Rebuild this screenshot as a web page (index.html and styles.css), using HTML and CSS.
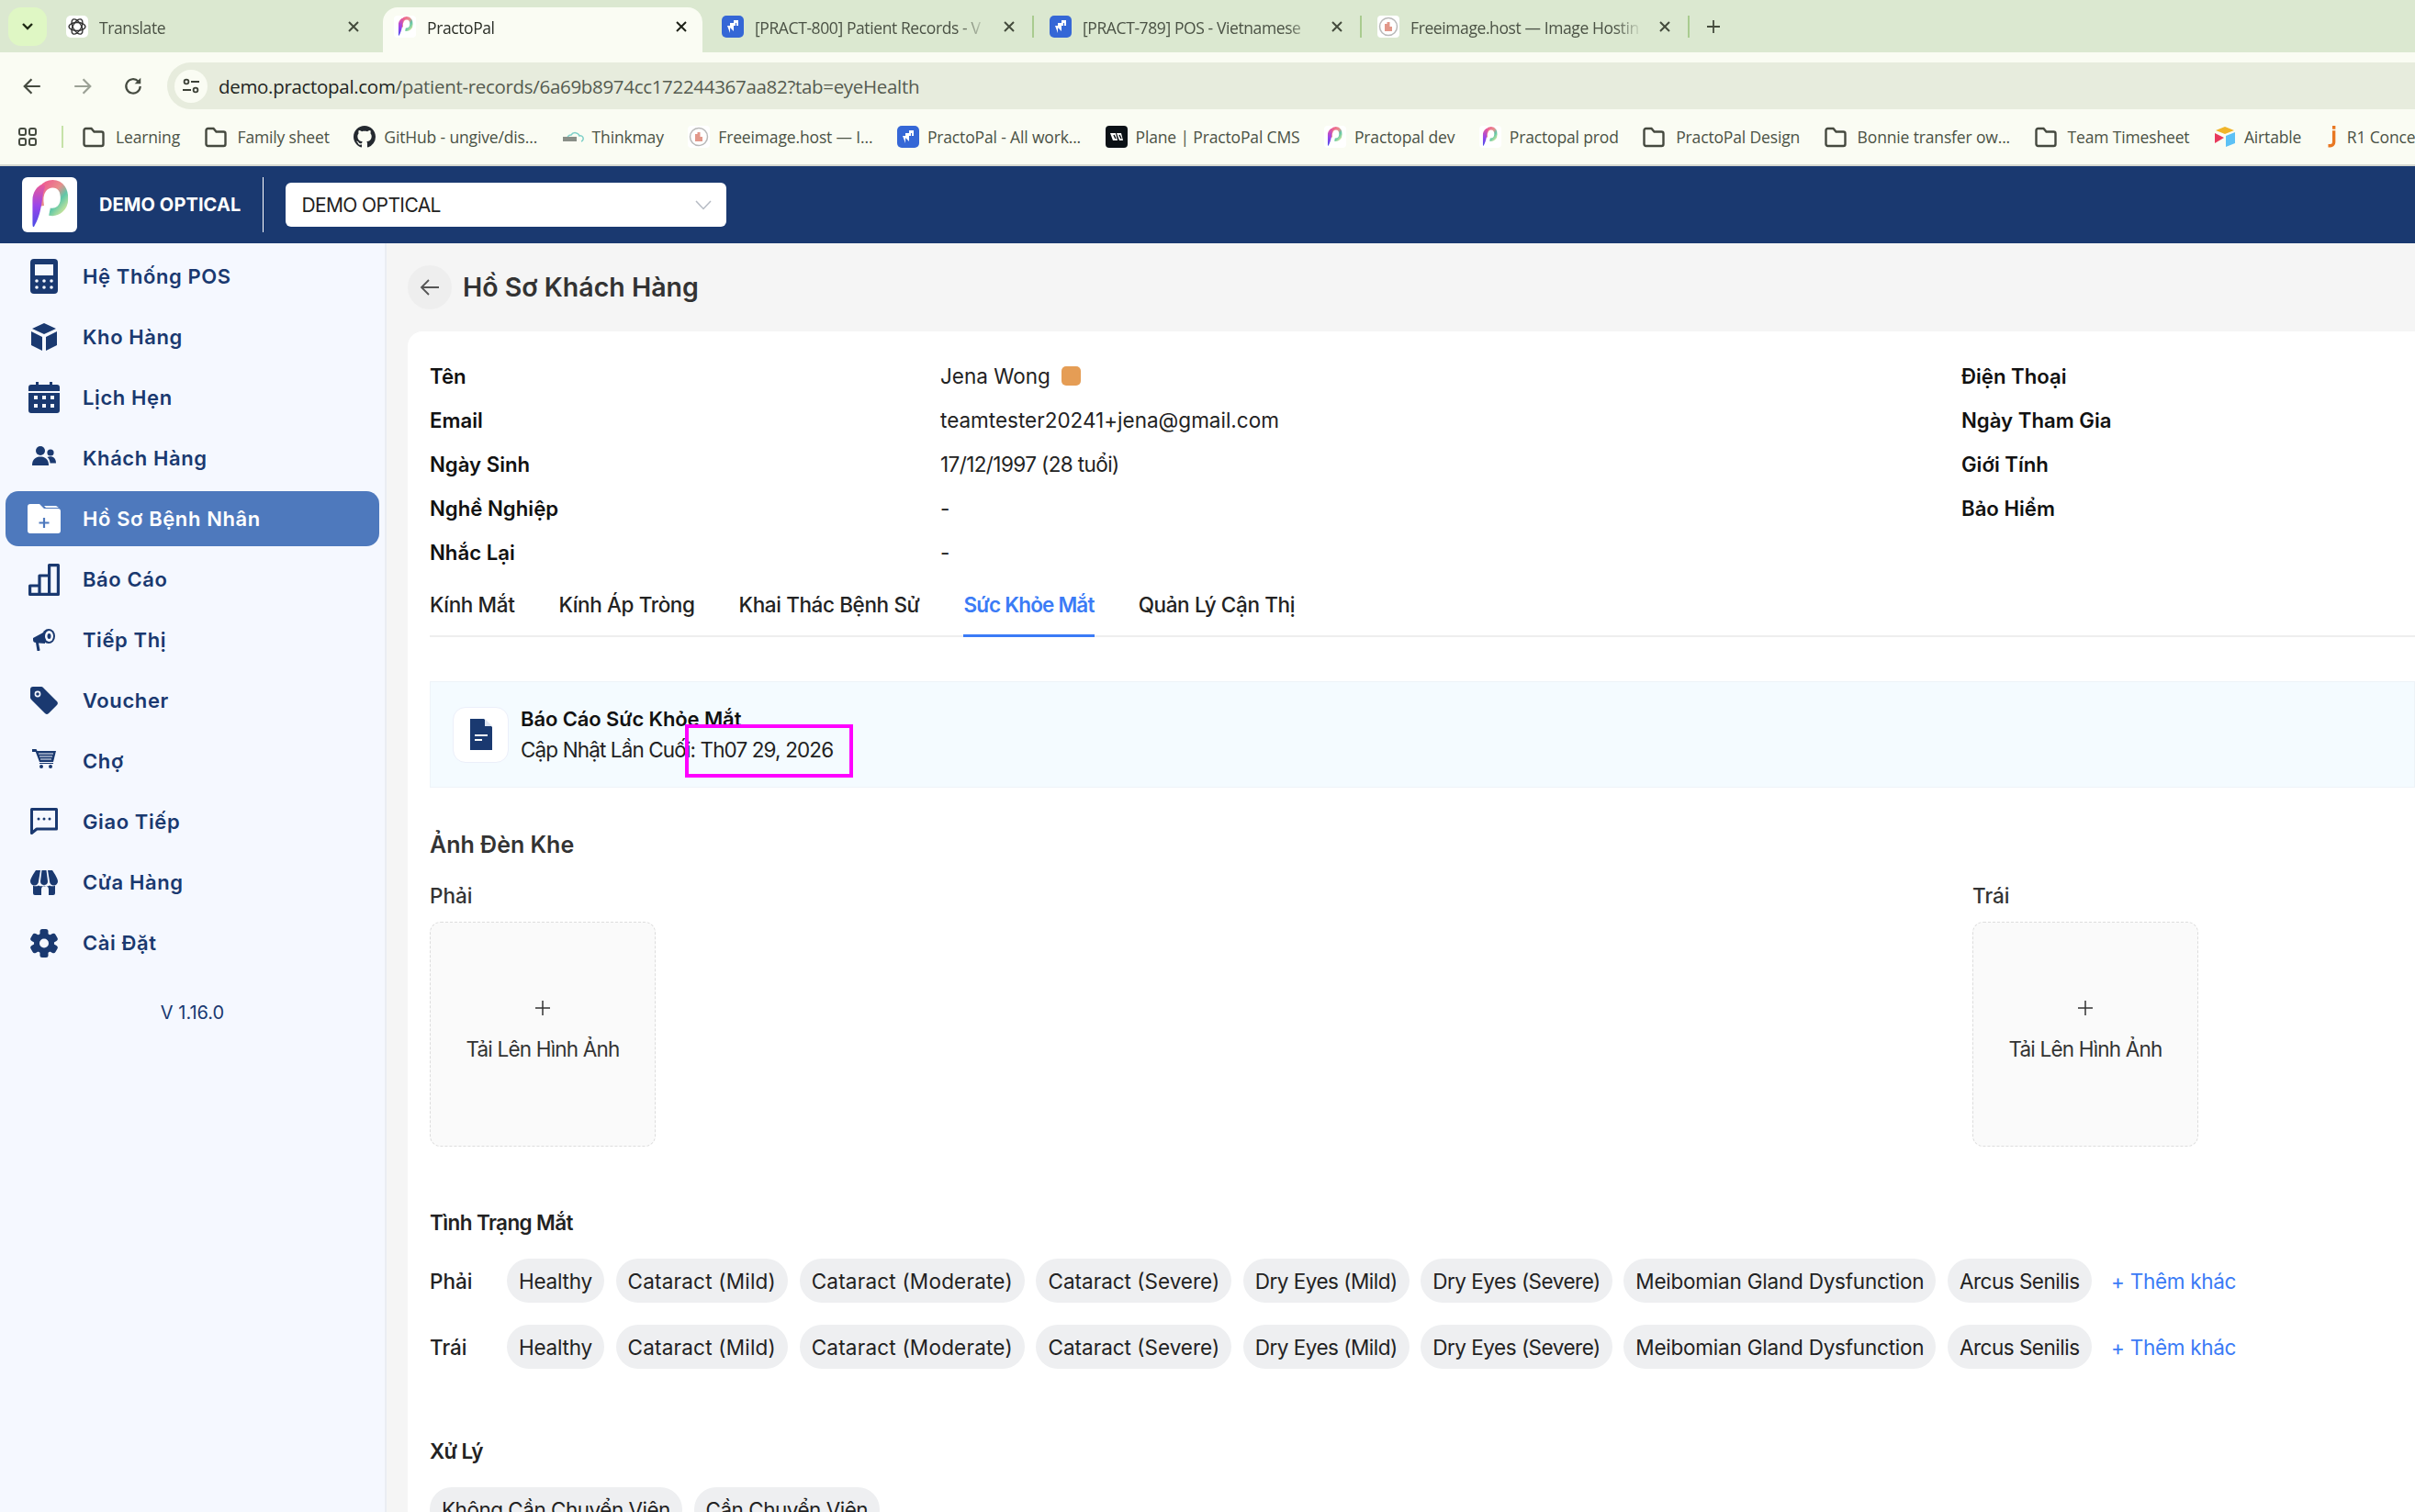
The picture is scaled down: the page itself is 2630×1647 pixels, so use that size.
FILE: index.html
```html
<!DOCTYPE html>
<html lang="en">
<head>
  <meta charset="UTF-8">
  <title>PractoPal</title>
  <link rel="stylesheet" href="styles.css">
</head>
<body>
<svg class="defs" aria-hidden="true">
  <defs>
    <linearGradient id="arc" x1="0" y1="0" x2="1" y2="1">
      <stop offset="0" stop-color="#f0568f"/>
      <stop offset=".45" stop-color="#e88f8c"/>
      <stop offset=".7" stop-color="#5fc7a8"/>
      <stop offset="1" stop-color="#cfe69a"/>
    </linearGradient>
    <linearGradient id="stem" x1="0" y1="0" x2="0" y2="1">
      <stop offset="0" stop-color="#ea5a98"/>
      <stop offset=".5" stop-color="#9a45ea"/>
      <stop offset="1" stop-color="#4a4ce6"/>
    </linearGradient>
    <symbol id="i-logo" viewBox="0 0 24 32">
      <path d="M6 17C4 6 10 2.500 14 2.500c5.500 0 7.500 5 7.500 9.500 0 6-4.500 9.500-9.500 8.500" fill="none" stroke="url(#arc)" stroke-width="5"/>
      <path d="M1 13C1 8 4 4 7 3c3 0 2 2 1 5-1 4-1 14-6 22-1 1-1-1-1-3z" fill="url(#stem)"/>
    </symbol>
    <symbol id="i-folder" viewBox="0 0 24 24">
      <path d="M1.500 5a2 2 0 0 1 2-2h6l3 3.500h8a2 2 0 0 1 2 2V20a2 2 0 0 1-2 2h-17a2 2 0 0 1-2-2z" fill="none" stroke="#45493f" stroke-width="2.400"/>
    </symbol>
    <symbol id="i-freeimage" viewBox="0 0 24 24">
      <rect width="24" height="24" rx="4" fill="#fff"/>
      <circle cx="12" cy="12" r="9.500" fill="none" stroke="#b9b9b9" stroke-width="1.500"/>
      <path d="M8 17V9h2.500v-2h3v5H16v5z" fill="#e2988a"/>
    </symbol>
  </defs>
</svg>

<div class="tabstrip">
  <div class="tabsearch">
    <svg width="14" height="10" viewBox="0 0 14 10"><path d="M2 2l5 5 5-5" fill="none" stroke="#1f2a14" stroke-width="2.400"/></svg>
  </div>
  <div class="tab">
    <svg class="fav" viewBox="0 0 24 24">
      <rect width="24" height="24" rx="5" fill="#fff"/>
      <g fill="none" stroke="#333" stroke-width="1.400">
        <ellipse cx="12" cy="12" rx="9" ry="4.500"/>
        <ellipse cx="12" cy="12" rx="9" ry="4.500" transform="rotate(60 12 12)"/>
        <ellipse cx="12" cy="12" rx="9" ry="4.500" transform="rotate(120 12 12)"/>
      </g>
    </svg>
    <span class="tab-title">Translate</span>
    <svg class="tab-x" viewBox="0 0 14 14"><path d="M2 2l10 10M12 2L2 12" stroke="#444b3c" stroke-width="2"/></svg>
  </div>
  <div class="tab tab-active">
    <span class="fav fav-white"><svg viewBox="0 0 24 32"><use href="#i-logo"/></svg></span>
    <span class="tab-title">PractoPal</span>
    <svg class="tab-x" viewBox="0 0 14 14"><path d="M2 2l10 10M12 2L2 12" stroke="#1d2117" stroke-width="2"/></svg>
  </div>
  <div class="tab tab-sep">
    <svg class="fav" viewBox="0 0 24 24"><rect width="24" height="24" rx="5" fill="#3567d6"/><path d="M6 11h6v3l-3-.5V19zM9 8h6v3h-2v6l-4-4zM13 5h5v6h-2V8h-3z" fill="#fff"/></svg>
    <span class="tab-title">[PRACT-800] Patient Records - V</span>
    <svg class="tab-x" viewBox="0 0 14 14"><path d="M2 2l10 10M12 2L2 12" stroke="#444b3c" stroke-width="2"/></svg>
  </div>
  <div class="tab tab-sep">
    <svg class="fav" viewBox="0 0 24 24"><rect width="24" height="24" rx="5" fill="#3567d6"/><path d="M6 11h6v3l-3-.5V19zM9 8h6v3h-2v6l-4-4zM13 5h5v6h-2V8h-3z" fill="#fff"/></svg>
    <span class="tab-title">[PRACT-789] POS - Vietnamese</span>
    <svg class="tab-x" viewBox="0 0 14 14"><path d="M2 2l10 10M12 2L2 12" stroke="#444b3c" stroke-width="2"/></svg>
  </div>
  <div class="tab tab-sep">
    <svg class="fav"><use href="#i-freeimage"/></svg>
    <span class="tab-title">Freeimage.host — Image Hostin</span>
    <svg class="tab-x" viewBox="0 0 14 14"><path d="M2 2l10 10M12 2L2 12" stroke="#444b3c" stroke-width="2"/></svg>
  </div>
  <svg class="tab-plus" viewBox="0 0 16 16"><path d="M8 1v14M1 8h14" stroke="#444b3c" stroke-width="1.800"/></svg>
</div>

<div class="toolbar">
  <svg class="nav-btn" viewBox="0 0 20 20"><path d="M18 10H3M9.500 3L2.500 10l7 7" fill="none" stroke="#454b40" stroke-width="2"/></svg>
  <svg class="nav-btn" viewBox="0 0 20 20"><path d="M2 10h15M10.500 3l7 7-7 7" fill="none" stroke="#9ba195" stroke-width="2"/></svg>
  <svg class="nav-btn" viewBox="0 0 20 20"><path d="M17 10a7 7 0 1 1-2-5" fill="none" stroke="#454b40" stroke-width="2"/><path d="M17.500 1.500v6h-6z" fill="#454b40"/></svg>
  <div class="omnibox">
    <span class="site-btn">
      <svg width="20" height="20" viewBox="0 0 20 20" fill="none" stroke="#3c4136" stroke-width="1.800"><circle cx="5" cy="5" r="2.400"/><path d="M10 5h9M1 14h9"/><circle cx="15" cy="14" r="2.400"/></svg>
    </span>
    <span class="url"><span class="url-host">demo.practopal.com</span>/patient-records/6a69b8974cc172244367aa82?tab=eyeHealth</span>
  </div>
</div>

<div class="bookmarks">
  <svg class="apps" viewBox="0 0 20 20" fill="none" stroke="#454b40" stroke-width="2"><rect x="1" y="1" width="7" height="7" rx="2"/><rect x="12" y="1" width="7" height="7" rx="2"/><rect x="1" y="12" width="7" height="7" rx="2"/><rect x="12" y="12" width="7" height="7" rx="2"/></svg>
  <span class="bm-sep"></span>
  <div class="bm bm-dir"><svg class="bm-ico"><use href="#i-folder"/></svg>Learning</div>
  <div class="bm bm-dir"><svg class="bm-ico"><use href="#i-folder"/></svg>Family sheet</div>
  <div class="bm"><svg class="bm-ico" viewBox="0 0 16 16"><path fill="#24292f" d="M8 0C3.58 0 0 3.58 0 8c0 3.54 2.29 6.530 5.470 7.590.4.07.55-.17.55-.38 0-.19-.01-.82-.01-1.490-2.010.37-2.530-.49-2.690-.94-.09-.23-.48-.94-.82-1.130-.28-.15-.68-.52-.01-.53.63-.01 1.080.58 1.230.82.72 1.210 1.870.87 2.330.66.07-.52.28-.87.51-1.070-1.780-.2-3.640-.89-3.640-3.950 0-.87.31-1.590.82-2.150-.08-.2-.36-1.020.08-2.120 0 0 .67-.21 2.200.82.64-.18 1.320-.27 2-.27.68 0 1.360.09 2 .27 1.530-1.040 2.200-.82 2.200-.82.44 1.100.16 1.920.08 2.120.51.56.82 1.270.82 2.150 0 3.070-1.870 3.750-3.650 3.950.29.25.54.73.54 1.480 0 1.070-.01 1.930-.01 2.200 0 .21.15.46.55.38A8.013 8.013 0 0 0 16 8c0-4.420-3.580-8-8-8z"/></svg>GitHub - ungive/dis...</div>
  <div class="bm"><svg class="bm-ico" viewBox="0 0 24 24"><path d="M6 13a4 4 0 0 1 4-3 5 5 0 0 1 9 1 3 3 0 0 1 2 6" fill="none" stroke="#7fd0c8" stroke-width="1.500"/><rect x="1" y="12" width="15" height="5" fill="#8a8f88"/></svg>Thinkmay</div>
  <div class="bm"><svg class="bm-ico"><use href="#i-freeimage"/></svg>Freeimage.host — I...</div>
  <div class="bm"><svg class="bm-ico" viewBox="0 0 24 24"><rect width="24" height="24" rx="5" fill="#3567d6"/><path d="M6 11h6v3l-3-.5V19zM9 8h6v3h-2v6l-4-4zM13 5h5v6h-2V8h-3z" fill="#fff"/></svg>PractoPal - All work...</div>
  <div class="bm"><svg class="bm-ico" viewBox="0 0 24 24"><rect width="24" height="24" rx="4" fill="#0b1116"/><path d="M5 8h6l2 8H8zM12 8h5l2 8h-4z" fill="#fff"/><path d="M9 10l2 4M15 10l2 4" stroke="#0b1116" stroke-width="1.500"/></svg>Plane | PractoPal CMS</div>
  <div class="bm"><span class="bm-ico fav-white"><svg viewBox="0 0 24 32"><use href="#i-logo"/></svg></span>Practopal dev</div>
  <div class="bm"><span class="bm-ico fav-white"><svg viewBox="0 0 24 32"><use href="#i-logo"/></svg></span>Practopal prod</div>
  <div class="bm bm-dir"><svg class="bm-ico"><use href="#i-folder"/></svg>PractoPal Design</div>
  <div class="bm bm-dir"><svg class="bm-ico"><use href="#i-folder"/></svg>Bonnie transfer ow...</div>
  <div class="bm bm-dir"><svg class="bm-ico"><use href="#i-folder"/></svg>Team Timesheet</div>
  <div class="bm"><svg class="bm-ico" viewBox="0 0 24 24"><path d="M12 1l10 4-10 4L2 5z" fill="#f0b429"/><path d="M13 11l10-4v12l-10 4z" fill="#5cc1f5"/><path d="M1 8l10 5-10 6z" fill="#e8395c"/></svg>Airtable</div>
  <div class="bm"><svg class="bm-ico bm-ico-j" viewBox="0 0 14 32"><rect x="7" width="4.500" height="5" fill="#e87722"/><path d="M9.200 7v17a5 5 0 0 1-5 5H1" fill="none" stroke="#e87722" stroke-width="4.500"/></svg>R1 Concept</div>
</div>

<header class="appbar">
  <div class="brand-logo"><svg viewBox="0 0 24 32"><use href="#i-logo"/></svg></div>
  <div class="brand-name">DEMO OPTICAL</div>
  <span class="brand-divider"></span>
  <div class="store-select">
    <span>DEMO OPTICAL</span>
    <svg width="18" height="11" viewBox="0 0 18 11"><path d="M1 1l8 8.500L17 1" fill="none" stroke="#b6bbc4" stroke-width="1.500"/></svg>
  </div>
</header>

<div class="layout">
  <aside class="sidebar">
    <nav class="menu">
      <a class="menu-item"><span class="menu-ico"><svg width="30" height="38" viewBox="0 0 30 38"><rect width="30" height="38" rx="4"/><rect x="5" y="6" width="20" height="12" fill="#f5f8ff"/><g fill="#f5f8ff"><circle cx="7" cy="24" r="1.800"/><circle cx="15" cy="24" r="1.800"/><circle cx="23" cy="24" r="1.800"/><circle cx="7" cy="31" r="1.800"/><circle cx="15" cy="31" r="1.800"/><circle cx="23" cy="31" r="1.800"/></g></svg></span>Hệ Thống POS</a>
      <a class="menu-item"><span class="menu-ico"><svg width="28" height="30" viewBox="0 0 28 30"><path d="M14 0l13 6-13 6L1 6zM0 9l12 6v15L0 24zM28 9l-12 6v15l12-6z"/></svg></span>Kho Hàng</a>
      <a class="menu-item"><span class="menu-ico"><svg width="34" height="34" viewBox="0 0 34 34"><path d="M8 0h3v3h12V0h3v3h5a3 3 0 0 1 3 3v4H0V6a3 3 0 0 1 3-3h5zM0 12h34v19a3 3 0 0 1-3 3H3a3 3 0 0 1-3-3z"/><g fill="#f5f8ff"><rect x="6" y="15" width="4" height="4"/><rect x="15" y="15" width="4" height="4"/><rect x="24" y="15" width="4" height="4"/><rect x="6" y="24" width="4" height="4"/><rect x="15" y="24" width="4" height="4"/><rect x="24" y="24" width="4" height="4"/></g></svg></span>Lịch Hẹn</a>
      <a class="menu-item"><span class="menu-ico menu-ico-up"><svg width="26" height="21" viewBox="0 0 26 21"><circle cx="9" cy="5" r="5"/><path d="M0 21c0-7 4-9.500 9-9.500S18 14 18 21z"/><circle cx="20" cy="7" r="3.600"/><path d="M16.500 12c3-1.500 9.500-1 9.500 6.500h-6.500c0-2.500-1-5-3-6.500z"/></svg></span>Khách Hàng</a>
      <a class="menu-item menu-active"><span class="menu-ico"><svg width="36" height="32" viewBox="0 0 36 32"><path d="M0 3a3 3 0 0 1 3-3h10l5 5h15a3 3 0 0 1 3 3v21a3 3 0 0 1-3 3H3a3 3 0 0 1-3-3z"/><path d="M18 2h13l3 2H20z"/><path d="M18 15v11M12.500 20.500h11" stroke="#4e79bd" stroke-width="2.200"/></svg></span>Hồ Sơ Bệnh Nhân</a>
      <a class="menu-item"><span class="menu-ico"><svg width="34" height="35" viewBox="0 0 34 35" fill="none" stroke="#1a3970" stroke-width="3.200" stroke-linejoin="round"><path d="M1.600 24h10.400v9.400H1.600zM12 13h10.600v20.400H12zM22.600 1.600h9.800v31.800h-9.800z"/></svg></span>Báo Cáo</a>
      <a class="menu-item"><span class="menu-ico"><svg width="24" height="24" viewBox="0 0 24 24"><path d="M0 10l13-7v13l-7-.5L7.500 23a1 1 0 0 1-1 1H4.500L3 15a3 3 0 0 1-3-3z"/><ellipse cx="17" cy="8" rx="7" ry="8"/><ellipse cx="17.500" cy="8" rx="4.500" ry="6" fill="#f5f8ff"/><ellipse cx="17.500" cy="8" rx="2" ry="3"/></svg></span>Tiếp Thị</a>
      <a class="menu-item"><span class="menu-ico"><svg width="30" height="30" viewBox="0 0 30 30"><path d="M0 3a3 3 0 0 1 3-3h9a3 3 0 0 1 2 1l15 15a3 3 0 0 1 0 4l-9 9a3 3 0 0 1-4 0L1 14a3 3 0 0 1-1-2z"/><circle cx="8" cy="8" r="2.600" fill="none" stroke="#f5f8ff" stroke-width="1.600"/></svg></span>Voucher</a>
      <a class="menu-item"><span class="menu-ico menu-ico-up"><svg width="26" height="21" viewBox="0 0 26 21"><path d="M0 0h4.500L5.500 2H26l-3 12H8L3.800 3H0z"/><path d="M7 5h16M8 8h14M9 11h12" stroke="#f5f8ff" stroke-width="1"/><path d="M8 15.500h15" stroke="#1a3970" stroke-width="1"/><circle cx="10" cy="19" r="2"/><circle cx="20" cy="19" r="2"/></svg></span>Chợ</a>
      <a class="menu-item"><span class="menu-ico"><svg width="30" height="30" viewBox="0 0 30 30"><path d="M1.500 1.500h27v21.500H7l-5.500 4.500z" fill="none" stroke="#1a3970" stroke-width="3" stroke-linejoin="round"/><circle cx="9" cy="12" r="1.500"/><circle cx="15" cy="12" r="1.500"/><circle cx="21" cy="12" r="1.500"/></svg></span>Giao Tiếp</a>
      <a class="menu-item"><span class="menu-ico"><svg width="30" height="27" viewBox="0 0 30 27"><path d="M6 0h5l-2 12a3.500 3.500 0 0 1-9 0c0-3 4-9 6-12zM12.500 0h5l1.500 12a4 4 0 0 1-8 0zM19 0h5c2 3 6 9 6 12a3.500 3.500 0 0 1-9 0z"/><path d="M3 16.500a6 6 0 0 0 6 0 6 6 0 0 0 6 0 6 6 0 0 0 6 0 6 6 0 0 0 6 0V25a2 2 0 0 1-2 2h-5v-6a4 4 0 0 0-8 0v6H5a2 2 0 0 1-2-2z"/></svg></span>Cửa Hàng</a>
      <a class="menu-item"><span class="menu-ico"><svg width="30" height="31" viewBox="-15 -15.500 30 31"><g><rect x="-4.500" y="-15.500" width="9" height="31" rx="2.500"/><rect x="-4.500" y="-15.500" width="9" height="31" rx="2.500" transform="rotate(60)"/><rect x="-4.500" y="-15.500" width="9" height="31" rx="2.500" transform="rotate(120)"/></g><circle r="11"/><circle r="5" fill="#f5f8ff"/></svg></span>Cài Đặt</a>
    </nav>
    <div class="version">V 1.16.0</div>
  </aside>

  <main class="content">
    <div class="page-head">
      <span class="back-btn"><svg width="22" height="20" viewBox="0 0 22 20"><path d="M21 10H2M10 2l-8 8 8 8" fill="none" stroke="#555" stroke-width="1.800"/></svg></span>
      <h1 class="page-title">Hồ Sơ Khách Hàng</h1>
    </div>

    <section class="card">
      <div class="info-grid">
        <div class="info-label">Tên</div>
        <div class="info-value">Jena Wong <span class="swatch"></span></div>
        <div class="info-label">Điện Thoại</div>
        <div class="info-label">Email</div>
        <div class="info-value">teamtester20241+jena@gmail.com</div>
        <div class="info-label">Ngày Tham Gia</div>
        <div class="info-label">Ngày Sinh</div>
        <div class="info-value value-tight">17/12/1997 (28 tuổi)</div>
        <div class="info-label">Giới Tính</div>
        <div class="info-label">Nghề Nghiệp</div>
        <div class="info-value">-</div>
        <div class="info-label">Bảo Hiểm</div>
        <div class="info-label">Nhắc Lại</div>
        <div class="info-value">-</div>
        <div></div>
      </div>

      <div class="tabs">
        <a class="tab-link">Kính Mắt</a>
        <a class="tab-link">Kính Áp Tròng</a>
        <a class="tab-link">Khai Thác Bệnh Sử</a>
        <a class="tab-link tab-link-on">Sức Khỏe Mắt</a>
        <a class="tab-link">Quản Lý Cận Thị</a>
      </div>

      <div class="report">
        <span class="report-ico"><svg width="24" height="34" viewBox="0 0 24 34"><path d="M0 0h15l9 9v25H0z" fill="#1a3970"/><path d="M16 0l8 8h-8z" fill="#dfe6f2"/><path d="M5 17h14v2H5zM5 22h8v2H5z" fill="#fff"/></svg></span>
        <div>
          <div class="report-title">Báo Cáo Sức Khỏe Mắt</div>
          <div class="report-sub">Cập Nhật Lần Cuối: Th07 29, 2026</div>
        </div>
        <span class="highlight"></span>
      </div>

      <h2 class="section-big">Ảnh Đèn Khe</h2>
      <div class="photos">
        <div class="photo-col">
          <div class="photo-label">Phải</div>
          <div class="upload"><svg width="18" height="18" viewBox="0 0 18 18"><path d="M9 1v16M1 9h16" stroke="#333" stroke-width="1.500"/></svg><span>Tải Lên Hình Ảnh</span></div>
        </div>
        <div class="photo-col">
          <div class="photo-label">Trái</div>
          <div class="upload"><svg width="18" height="18" viewBox="0 0 18 18"><path d="M9 1v16M1 9h16" stroke="#333" stroke-width="1.500"/></svg><span>Tải Lên Hình Ảnh</span></div>
        </div>
      </div>

      <h3 class="section-small">Tình Trạng Mắt</h3>
      <div class="chip-row">
        <span class="chip-label">Phải</span>
        <span class="chip chip-snug">Healthy</span><span class="chip chip-wide">Cataract (Mild)</span><span class="chip chip-wide">Cataract (Moderate)</span><span class="chip">Cataract (Severe)</span><span class="chip chip-tight">Dry Eyes (Mild)</span><span class="chip chip-tight">Dry Eyes (Severe)</span><span class="chip chip-snug">Meibomian Gland Dysfunction</span><span class="chip chip-tight">Arcus Senilis</span>
        <a class="add-more">+ Thêm khác</a>
      </div>
      <div class="chip-row">
        <span class="chip-label">Trái</span>
        <span class="chip chip-snug">Healthy</span><span class="chip chip-wide">Cataract (Mild)</span><span class="chip chip-wide">Cataract (Moderate)</span><span class="chip">Cataract (Severe)</span><span class="chip chip-tight">Dry Eyes (Mild)</span><span class="chip chip-tight">Dry Eyes (Severe)</span><span class="chip chip-snug">Meibomian Gland Dysfunction</span><span class="chip chip-tight">Arcus Senilis</span>
        <a class="add-more">+ Thêm khác</a>
      </div>

      <h3 class="section-small section-treat">Xử Lý</h3>
      <div class="chip-row">
        <span class="chip chip-tight">Không Cần Chuyển Viện</span><span class="chip chip-tight">Cần Chuyển Viện</span>
      </div>
    </section>
  </main>
</div>
</body>
</html>
```

FILE: styles.css
```css
:root{
  --navy: #1a3970;
  --blue: #3b7bf6;
  --app-font: Inter, "Noto Sans", sans-serif;
  --ui-font: "Open Sans", "Noto Sans", sans-serif;
}
*{
  box-sizing: border-box;
}
html, body{
  margin: 0;
  padding: 0;
}
body{
  width: 2630px;
  height: 1647px;
  overflow: hidden;
  font-family: var(--app-font);
  background: #f5f5f5;
  color: #111;
}
.defs{
  position: absolute;
  width: 0;
  height: 0;
}

/* browser chrome */
.tabstrip{
  height: 57px;
  background: #dbe8d0;
  display: flex;
  align-items: flex-end;
  padding-left: 9px;
  font-family: var(--ui-font);
}
.tabsearch{
  width: 42px;
  height: 42px;
  margin: 0 9px 7px 0;
  border-radius: 14px;
  background: #dff7c4;
  display: flex;
  align-items: center;
  justify-content: center;
}
.tab{
  position: relative;
  width: 357px;
  height: 49px;
  padding: 0 20px 8px 12px;
  display: flex;
  align-items: center;
  gap: 12px;
  color: #4b5245;
  font-size: 17.500px;
  letter-spacing: -.4px;
}
.tab-active{
  width: 348px;
  margin-right: 9px;
  padding-right: 11px;
  background: #fafcf3;
  border-radius: 16px 16px 0 0;
  color: #2b2f27;
}
.tab-sep::after{
  content: "";
  position: absolute;
  right: 5px;
  top: 9px;
  width: 2px;
  height: 24px;
  background: #a9cb8f;
}
.fav{
  width: 24px;
  height: 24px;
  flex: none;
}
.fav-white{
  background: #fff;
  border-radius: 4px;
  display: flex;
  align-items: center;
  justify-content: center;
}
.fav-white svg{
  width: 17px;
  height: 22px;
}
.tab-title{
  flex: 1;
  min-width: 0;
  margin-top: 2px;
  white-space: nowrap;
  overflow: hidden;
  -webkit-mask-image: linear-gradient(to right, #000 88%, transparent);
  mask-image: linear-gradient(to right, #000 88%, transparent);
}
.tab-x{
  width: 14px;
  height: 14px;
  flex: none;
  margin: 0 5px;
}
.tab-plus{
  width: 16px;
  height: 16px;
  margin: 0 0 20px 13px;
}
.toolbar{
  height: 62px;
  background: #fafcf3;
  display: flex;
  align-items: flex-end;
  gap: 33px;
  padding-left: 24px;
}
.nav-btn{
  width: 22px;
  height: 22px;
  margin-bottom: 14px;
}
.omnibox{
  flex: 1;
  height: 51px;
  margin-left: -7px;
  background: #e7ecdd;
  border-radius: 26px 0 0 26px;
  display: flex;
  align-items: center;
  gap: 12px;
  padding-left: 8px;
  font-family: var(--ui-font);
}
.site-btn{
  width: 36px;
  height: 36px;
  border-radius: 50%;
  background: #fafcf3;
  display: flex;
  align-items: center;
  justify-content: center;
}
.url{
  font-size: 20.500px;
  letter-spacing: -.31px;
  color: #555b50;
  white-space: nowrap;
}
.url-host{
  color: #22251f;
}
.bookmarks{
  height: 62px;
  background: #fafcf3;
  border-bottom: 2px solid #d5d8cf;
  display: flex;
  align-items: center;
  gap: 26.500px;
  padding-left: 20px;
  font-family: var(--ui-font);
  font-size: 17.500px;
  letter-spacing: -.15px;
  color: #4b5245;
  white-space: nowrap;
  overflow: hidden;
}
.apps{
  width: 20px;
  height: 24px;
  flex: none;
}
.bm-sep{
  width: 2px;
  height: 24px;
  margin-right: -5px;
  background: #c6e2a8;
  flex: none;
}
.bm{
  display: flex;
  align-items: center;
  gap: 9px;
  flex: none;
}
.bm-dir{
  gap: 12px;
}
.bm-ico{
  width: 24px;
  height: 24px;
  flex: none;
}
.bm-ico-j{
  width: 14px;
}

/* app header */
.appbar{
  height: 84px;
  background: var(--navy);
  display: flex;
  align-items: center;
  padding-left: 24px;
}
.brand-logo{
  width: 60px;
  height: 60px;
  background: #fff;
  border-radius: 6px;
  display: flex;
  align-items: center;
  justify-content: center;
}
.brand-logo svg{
  width: 42px;
  height: 54px;
}
.brand-name{
  margin: 0 24px;
  color: #fff;
  font-size: 20px;
  letter-spacing: .1px;
  font-weight: 700;
}
.brand-divider{
  width: 1px;
  height: 60px;
  background: #fff;
}
.store-select{
  margin-left: 24px;
  width: 480px;
  height: 48px;
  background: #fff;
  border-radius: 6px;
  display: flex;
  align-items: center;
  justify-content: space-between;
  padding: 0 16px 0 17px;
  font-size: 21px;
  letter-spacing: -.6px;
  color: #222;
}

/* layout */
.layout{
  display: flex;
  height: 1382px;
}
.sidebar{
  width: 421px;
  flex: none;
  background: #f5f8ff;
  border-right: 2px solid #eaedf3;
  padding: 6px 6px 0;
}
.menu{
  display: flex;
  flex-direction: column;
  gap: 6px;
}
.menu-item{
  height: 60px;
  border-radius: 14px;
  display: flex;
  align-items: center;
  gap: 24px;
  padding-left: 24px;
  color: var(--navy);
  fill: var(--navy);
  font-size: 22px;
  font-weight: 600;
  letter-spacing: .6px;
}
.menu-active{
  background: #4e79bd;
  color: #fff;
  fill: #fff;
}
.menu-ico{
  width: 36px;
  display: flex;
  justify-content: center;
  align-items: center;
}
.menu-ico-up{
  margin-top: -6px;
}
.version{
  margin-top: 34px;
  text-align: center;
  font-size: 20px;
  color: var(--navy);
}
.content{
  flex: 1;
  min-width: 0;
  padding: 0 0 0 23px;
}
.page-head{
  height: 94px;
  margin-bottom: 2px;
  display: flex;
  align-items: center;
  gap: 12px;
}
.page-title{
  margin: 0;
  font-size: 28.500px;
  font-weight: 600;
  color: #333;
}
.back-btn{
  width: 48px;
  height: 48px;
  margin-top: 2px;
  border-radius: 50%;
  background: #eeeeee;
  display: flex;
  align-items: center;
  justify-content: center;
}
.card{
  background: #fff;
  border-radius: 16px 0 0 0;
  padding: 24px 0 0 24px;
  height: 1300px;
}
.info-grid{
  display: grid;
  grid-template-columns: 556px 1112px 1fr;
  grid-auto-rows: 48px;
  align-items: center;
  font-size: 22.500px;
}
.info-label{
  font-weight: 600;
  font-size: 22.200px;
  color: #111;
}
.info-value{
  color: #222;
  display: flex;
  align-items: center;
  gap: 12px;
}
.value-tight{
  letter-spacing: -.6px;
}
.swatch{
  width: 21px;
  height: 21px;
  border-radius: 5px;
  background: #e59d55;
}
.tabs{
  height: 69px;
  display: flex;
  gap: 48px;
  border-bottom: 2px solid #eeeeee;
}
.tab-link{
  height: 69px;
  display: flex;
  align-items: center;
  font-size: 22.500px;
  font-weight: 500;
  letter-spacing: -.38px;
  color: #222;
  border-bottom: 3px solid transparent;
}
.tab-link-on{
  color: var(--blue);
  font-weight: 600;
  letter-spacing: -.8px;
  border-bottom-color: var(--blue);
}
.report{
  position: relative;
  margin-top: 48px;
  height: 116px;
  background: #f4fbff;
  border: 1px solid #eef3f8;
  display: flex;
  align-items: center;
  gap: 13px;
  padding-left: 24px;
}
.report-ico{
  width: 61px;
  height: 61px;
  background: #fff;
  border: 1px solid #ebeffa;
  border-radius: 14px;
  display: flex;
  align-items: center;
  justify-content: center;
}
.report-title{
  font-size: 22px;
  font-weight: 600;
  color: #111;
  line-height: 33px;
  letter-spacing: -.1px;
}
.report-sub{
  font-size: 22.500px;
  letter-spacing: -.88px;
  color: #222;
  line-height: 33px;
}
.highlight{
  position: absolute;
  left: 277px;
  top: 46px;
  width: 183px;
  height: 58px;
  border: 4px solid #ff00ff;
}
.section-big{
  margin: 42px 0 0;
  font-size: 25px;
  line-height: 40px;
  font-weight: 600;
  color: #333;
}
.photos{
  margin-top: 20px;
  display: flex;
  gap: 1434px;
}
.photo-label{
  font-size: 22.500px;
  font-weight: 500;
  color: #333;
  line-height: 32px;
  margin-bottom: 12px;
}
.upload{
  width: 246px;
  height: 245px;
  padding-bottom: 8px;
  background: #fafafa;
  border: 1px dashed #dddddd;
  border-radius: 12px;
  display: flex;
  flex-direction: column;
  align-items: center;
  justify-content: center;
  gap: 22px;
  font-size: 22.500px;
  letter-spacing: -.8px;
  color: #333;
}
.section-small{
  margin: 66px 0 0;
  font-size: 22.500px;
  letter-spacing: -.6px;
  line-height: 34px;
  font-weight: 600;
  color: #222;
}
.section-treat{
  margin-top: 73px;
}
.chip-row{
  margin-top: 22px;
  height: 48px;
  display: flex;
  align-items: center;
  gap: 12.600px;
  white-space: nowrap;
}
.chip-row + .chip-row{
  margin-top: 24px;
}
.chip-label{
  width: 71.400px;
  font-size: 22.500px;
  font-weight: 500;
  color: #222;
}
.chip{
  height: 48px;
  display: flex;
  align-items: center;
  padding: 0 13px;
  background: #eeeff1;
  border-radius: 24px;
  font-size: 22.500px;
  color: #222;
}
.chip-wide{
  letter-spacing: .22px;
}
.chip-snug{
  letter-spacing: -.22px;
}
.chip-tight{
  letter-spacing: -.5px;
}
.add-more{
  margin-left: 9px;
  font-size: 22.500px;
  letter-spacing: -.3px;
  color: var(--blue);
}
```
